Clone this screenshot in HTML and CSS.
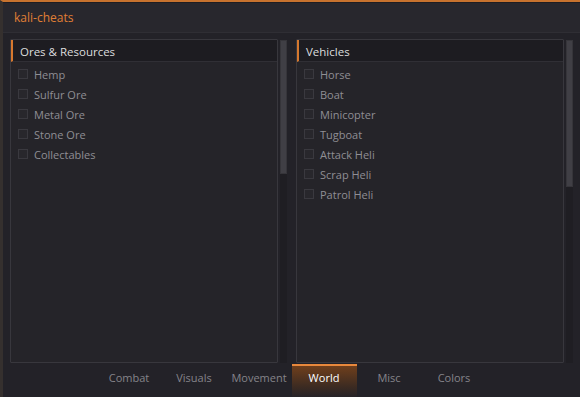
FILE: index.html
```html
<!DOCTYPE html>
<html lang="en">
<head>
  <meta charset="UTF-8" />
  <title>kali-cheats</title>
  <link rel="stylesheet" href="styles.css">
</head>
<body>
  <div class="window">
    <div class="titlebar">kali-cheats</div>

    <div class="content">
      <div class="column">
        <div class="panel">
          <div class="panel-header">Ores &amp; Resources</div>
          <ul class="items">
            <li><span class="check"></span>Hemp</li>
            <li><span class="check"></span>Sulfur Ore</li>
            <li><span class="check"></span>Metal Ore</li>
            <li><span class="check"></span>Stone Ore</li>
            <li><span class="check"></span>Collectables</li>
          </ul>
        </div>
        <div class="scrollbar"><div class="thumb thumb-left"></div></div>
      </div>

      <div class="column">
        <div class="panel">
          <div class="panel-header">Vehicles</div>
          <ul class="items">
            <li><span class="check"></span>Horse</li>
            <li><span class="check"></span>Boat</li>
            <li><span class="check"></span>Minicopter</li>
            <li><span class="check"></span>Tugboat</li>
            <li><span class="check"></span>Attack Heli</li>
            <li><span class="check"></span>Scrap Heli</li>
            <li><span class="check"></span>Patrol Heli</li>
          </ul>
        </div>
        <div class="scrollbar"><div class="thumb thumb-right"></div></div>
      </div>
    </div>

    <div class="tabs">
      <div class="tab">Combat</div>
      <div class="tab">Visuals</div>
      <div class="tab">Movement</div>
      <div class="tab active">World</div>
      <div class="tab">Misc</div>
      <div class="tab">Colors</div>
    </div>
  </div>
</body>
</html>
```

FILE: styles.css
```css
* {
  margin: 0;
  padding: 0;
  box-sizing: border-box;
}

body, html {
  height: 100%;
  background-color: #232228;
  font-family: 'Open Sans', 'DejaVu Sans', sans-serif;
  overflow: hidden;
}

.window {
  width: 580px;
  height: 397px;
  display: flex;
  flex-direction: column;
  background-color: #232228;
  border-top: 2px solid #c7722e;
  border-left: 3px solid #35302e;
}

.titlebar {
  height: 31px;
  padding-left: 11px;
  line-height: 30px;
  font-size: 12px;
  color: #e07f35;
  background-color: #28272d;
  border-top: 1px solid #1e1d22;
  border-bottom: 1px solid #2f2e34;
}

.content {
  display: flex;
  gap: 9px;
  padding: 6px 7px 0 7px;
  height: 331px;
}

.column {
  display: flex;
  gap: 2px;
}

.panel {
  width: 268px;
  height: 324px;
  border: 1px solid #38373d;
  background-color: #252429;
  border-radius: 1px;
}

.panel-header {
  height: 22px;
  line-height: 23px;
  padding-left: 7px;
  font-size: 11.5px;
  color: #dcdcde;
  background-color: #1d1c21;
  border-left: 2px solid #d6782e;
  border-bottom: 1px solid #302f35;
}

.items {
  list-style: none;
  padding-top: 2px;
}

.items li {
  display: flex;
  align-items: center;
  height: 20px;
  padding-left: 7px;
  font-size: 11px;
  color: #8f8e94;
}

.check {
  width: 10px;
  height: 10px;
  margin-right: 6px;
  border: 1px solid #3a393f;
  background-color: #28272c;
}

.scrollbar {
  width: 7px;
  height: 323px;
  margin-top: 1px;
  background-color: #1f1e23;
}

.thumb {
  width: 7px;
  background-color: #403f45;
  border: 1px solid #36353a;
}

.thumb-left {
  height: 134px;
}

.thumb-right {
  height: 147px;
}

.tabs {
  display: flex;
  justify-content: center;
  flex: 1;
}

.tab {
  width: 65px;
  height: 33px;
  line-height: 24px;
  text-align: center;
  font-size: 11px;
  color: #85848a;
  border-top: 2px solid transparent;
}

.tab.active {
  color: #ffffff;
  border-top: 2px solid #e8883c;
  background: linear-gradient(to bottom, #6f3f1c, #3a2a22 70%, #262328);
}
```
